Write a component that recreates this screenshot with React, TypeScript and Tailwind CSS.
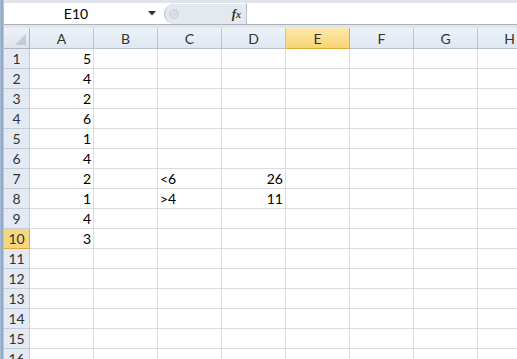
const columns = ['A', 'B', 'C', 'D', 'E', 'F', 'G', 'H']

// cell values keyed by row, then column letter
const cells: Record<number, Record<string, { v: string; align: 'left' | 'right' }>> = {
  1: { A: { v: '5', align: 'right' } },
  2: { A: { v: '4', align: 'right' } },
  3: { A: { v: '2', align: 'right' } },
  4: { A: { v: '6', align: 'right' } },
  5: { A: { v: '1', align: 'right' } },
  6: { A: { v: '4', align: 'right' } },
  7: {
    A: { v: '2', align: 'right' },
    C: { v: '<6', align: 'left' },
    D: { v: '26', align: 'right' },
  },
  8: {
    A: { v: '1', align: 'right' },
    C: { v: '>4', align: 'left' },
    D: { v: '11', align: 'right' },
  },
  9: { A: { v: '4', align: 'right' } },
  10: { A: { v: '3', align: 'right' } },
}

const rows = Array.from({ length: 16 }, (_, i) => i + 1)

const selectedCol = 'E'
const selectedRow = 10

function FormulaBar() {
  return (
    <div className="flex h-[22px] shrink-0 items-stretch border-b border-[#a9b1bb] bg-white">
      {/* name box */}
      <div className="flex w-[156px] items-center">
        <div className="flex-1 pl-1 text-center text-[14px] text-black">E10</div>
        <div className="flex w-[16px] items-center justify-center">
          <svg width="8" height="5" viewBox="0 0 8 5">
            <path d="M0 0 L8 0 L4 4.5 Z" fill="#333" />
          </svg>
        </div>
      </div>
      {/* grip + fx */}
      <div className="ml-[4px] mt-[1px] flex w-[82px] items-center rounded-l-full border-l border-[#b7c1cc] bg-[#e4e9ef]">
        <div className="ml-[4px] h-[10px] w-[10px] rounded-full border border-[#c8d0d9] bg-[#d8dee5]" />
        <div className="flex-1" />
        <span
          className="mr-[5px] text-[13px] font-bold italic text-[#333]"
          style={{ fontFamily: '"Liberation Serif", serif' }}
        >
          f<span className="text-[10px]">x</span>
        </span>
      </div>
      <div className="flex-1 border-l border-[#b7c1cc] bg-white" />
    </div>
  )
}

function HeaderRow() {
  return (
    <div className="flex h-[21px] shrink-0">
      <div className="relative w-[26px] shrink-0 border-r border-b border-[#a9b6c5] bg-gradient-to-b from-[#eef2f7] to-[#dce4ee]">
        <svg className="absolute right-[3px] bottom-[3px]" width="11" height="11" viewBox="0 0 11 11">
          <path d="M11 0 L11 11 L0 11 Z" fill="#c3cad3" />
        </svg>
      </div>
      {columns.map((c) =>
        c === selectedCol ? (
          <div
            key={c}
            className="flex w-[64px] shrink-0 items-center justify-center border-r border-b border-[#e0a83b] bg-gradient-to-b from-[#fde9ad] to-[#f8d472] text-[14px] text-[#333]"
          >
            {c}
          </div>
        ) : (
          <div
            key={c}
            className="flex w-[64px] shrink-0 items-center justify-center border-r border-b border-[#b9c4d0] bg-gradient-to-b from-[#eef3f9] to-[#dfe7f1] text-[14px] text-[#333]"
          >
            {c}
          </div>
        )
      )}
    </div>
  )
}

function SheetRow({ n }: { n: number }) {
  const data = cells[n] ?? {}
  const selected = n === selectedRow
  return (
    <div className="flex h-[20px] shrink-0">
      <div
        className={
          selected
            ? 'flex w-[26px] shrink-0 items-center justify-center border-r border-b border-[#e0a83b] bg-[#f8d67e] text-[14px] text-[#333]'
            : 'flex w-[26px] shrink-0 items-center justify-center border-r border-b border-[#c4ccd6] bg-[#e3eaf3] text-[14px] text-[#333]'
        }
      >
        {n}
      </div>
      {columns.map((c) => {
        const cell = data[c]
        return (
          <div
            key={c}
            className={
              cell?.align === 'left'
                ? 'flex w-[64px] shrink-0 items-center justify-start border-r border-b border-[#dadcdd] pl-[2px] text-[14px] text-black'
                : 'flex w-[64px] shrink-0 items-center justify-end border-r border-b border-[#dadcdd] pr-[2px] text-[14px] text-black'
            }
          >
            {cell?.v}
          </div>
        )
      })}
    </div>
  )
}

export default function App() {
  return (
    <div
      className="flex h-[359px] w-[517px] overflow-hidden bg-white"
      style={{ fontFamily: 'Lato, "Liberation Sans", sans-serif' }}
    >
      {/* window edge */}
      <div className="flex w-[4px] shrink-0 bg-gradient-to-r from-[#b9cbe0] via-[#7f9dbf] to-[#c9d6e4]" />
      <div className="flex min-w-0 flex-1 flex-col">
        <div className="h-[3px] shrink-0 bg-[#dfe4ea]" />
        <FormulaBar />
        <div className="h-[3px] shrink-0 bg-[#e2e6eb]" />
        <HeaderRow />
        {rows.map((n) => (
          <SheetRow key={n} n={n} />
        ))}
      </div>
    </div>
  )
}
